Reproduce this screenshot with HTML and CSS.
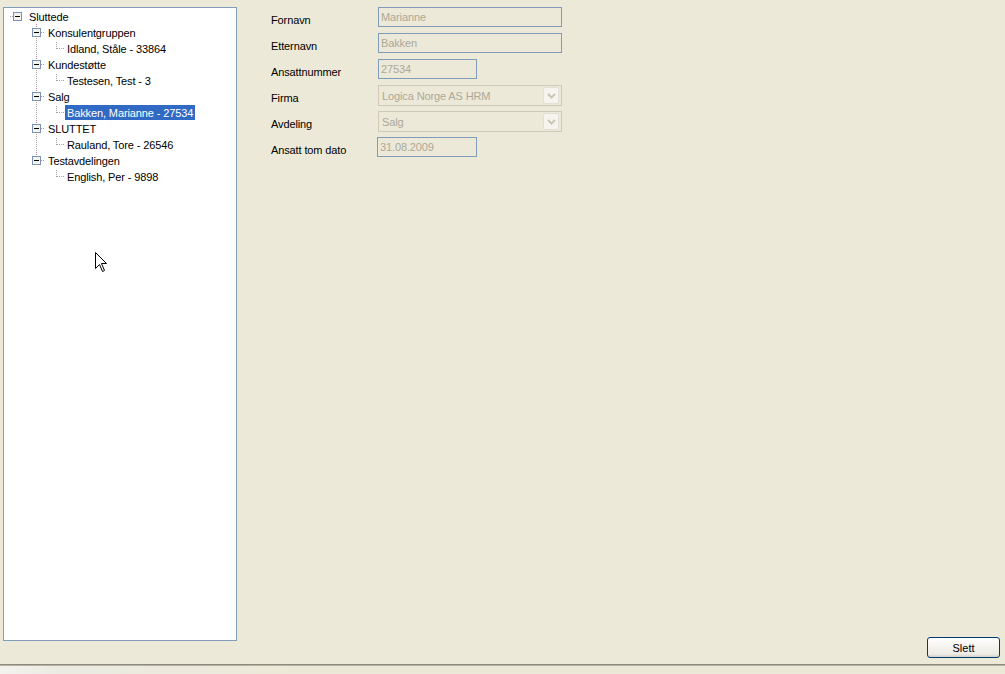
FILE: index.html
```html
<!DOCTYPE html>
<html lang="no">
<head>
<meta charset="utf-8">
<title>Sluttede</title>
<link rel="stylesheet" href="styles.css">
</head>
<body>
<div class="main">
  <div class="tree">
    <div class="row">
      <svg class="g g1" width="23" height="16" viewBox="0 0 23 16">
        <line x1="6" y1="8.5" x2="9" y2="8.5" class="dot"/>
        <rect x="9.5" y="4.5" width="8" height="8" class="box"/>
        <line x1="11" y1="8.5" x2="16" y2="8.5" class="minus"/>
      </svg>
      <span class="lbl">Sluttede</span>
    </div>

    <div class="row">
      <svg class="g" width="42" height="16" viewBox="0 0 42 16">
        <line x1="32.5" y1="0" x2="32.5" y2="16" class="dot"/>
        <line x1="37" y1="8.5" x2="41" y2="8.5" class="dot"/>
        <rect x="28.5" y="4.5" width="8" height="8" class="box"/>
        <line x1="30" y1="8.5" x2="35" y2="8.5" class="minus"/>
      </svg>
      <span class="lbl">Konsulentgruppen</span>
    </div>
    <div class="row">
      <svg class="g" width="61" height="16" viewBox="0 0 61 16">
        <line x1="32.5" y1="0" x2="32.5" y2="16" class="dot"/>
        <line x1="52.5" y1="2" x2="52.5" y2="9" class="dot"/>
        <line x1="53" y1="8.5" x2="61" y2="8.5" class="dot"/>
      </svg>
      <span class="lbl">Idland, Ståle - 33864</span>
    </div>

    <div class="row">
      <svg class="g" width="42" height="16" viewBox="0 0 42 16">
        <line x1="32.5" y1="0" x2="32.5" y2="16" class="dot"/>
        <line x1="37" y1="8.5" x2="41" y2="8.5" class="dot"/>
        <rect x="28.5" y="4.5" width="8" height="8" class="box"/>
        <line x1="30" y1="8.5" x2="35" y2="8.5" class="minus"/>
      </svg>
      <span class="lbl">Kundestøtte</span>
    </div>
    <div class="row">
      <svg class="g" width="61" height="16" viewBox="0 0 61 16">
        <line x1="32.5" y1="0" x2="32.5" y2="16" class="dot"/>
        <line x1="52.5" y1="2" x2="52.5" y2="9" class="dot"/>
        <line x1="53" y1="8.5" x2="61" y2="8.5" class="dot"/>
      </svg>
      <span class="lbl">Testesen, Test - 3</span>
    </div>

    <div class="row">
      <svg class="g" width="42" height="16" viewBox="0 0 42 16">
        <line x1="32.5" y1="0" x2="32.5" y2="16" class="dot"/>
        <line x1="37" y1="8.5" x2="41" y2="8.5" class="dot"/>
        <rect x="28.5" y="4.5" width="8" height="8" class="box"/>
        <line x1="30" y1="8.5" x2="35" y2="8.5" class="minus"/>
      </svg>
      <span class="lbl">Salg</span>
    </div>
    <div class="row">
      <svg class="g" width="61" height="16" viewBox="0 0 61 16">
        <line x1="32.5" y1="0" x2="32.5" y2="16" class="dot"/>
        <line x1="52.5" y1="2" x2="52.5" y2="9" class="dot"/>
        <line x1="53" y1="8.5" x2="61" y2="8.5" class="dot"/>
      </svg>
      <span class="lbl selected">Bakken, Marianne - 27534</span>
    </div>

    <div class="row">
      <svg class="g" width="42" height="16" viewBox="0 0 42 16">
        <line x1="32.5" y1="0" x2="32.5" y2="16" class="dot"/>
        <line x1="37" y1="8.5" x2="41" y2="8.5" class="dot"/>
        <rect x="28.5" y="4.5" width="8" height="8" class="box"/>
        <line x1="30" y1="8.5" x2="35" y2="8.5" class="minus"/>
      </svg>
      <span class="lbl">SLUTTET</span>
    </div>
    <div class="row">
      <svg class="g" width="61" height="16" viewBox="0 0 61 16">
        <line x1="32.5" y1="0" x2="32.5" y2="16" class="dot"/>
        <line x1="52.5" y1="2" x2="52.5" y2="9" class="dot"/>
        <line x1="53" y1="8.5" x2="61" y2="8.5" class="dot"/>
      </svg>
      <span class="lbl">Rauland, Tore - 26546</span>
    </div>

    <div class="row">
      <svg class="g" width="42" height="16" viewBox="0 0 42 16">
        <line x1="32.5" y1="0" x2="32.5" y2="8" class="dot"/>
        <line x1="37" y1="8.5" x2="41" y2="8.5" class="dot"/>
        <rect x="28.5" y="4.5" width="8" height="8" class="box"/>
        <line x1="30" y1="8.5" x2="35" y2="8.5" class="minus"/>
      </svg>
      <span class="lbl">Testavdelingen</span>
    </div>
    <div class="row">
      <svg class="g" width="61" height="16" viewBox="0 0 61 16">
        <line x1="52.5" y1="2" x2="52.5" y2="9" class="dot"/>
        <line x1="53" y1="8.5" x2="61" y2="8.5" class="dot"/>
      </svg>
      <span class="lbl">English, Per - 9898</span>
    </div>
  </div>

  <div class="right">
    <div class="form">
      <div class="label">Fornavn</div>
      <div class="field wide">Marianne</div>

      <div class="label">Etternavn</div>
      <div class="field wide">Bakken</div>

      <div class="label">Ansattnummer</div>
      <div class="field narrow">27534</div>

      <div class="label">Firma</div>
      <div class="combo">
        <span class="combo-text">Logica Norge AS HRM</span>
        <span class="combo-btn"><svg width="9" height="6" viewBox="0 0 9 6"><polyline points="1,1 4.5,4.5 8,1" class="chev"/></svg></span>
      </div>

      <div class="label">Avdeling</div>
      <div class="combo">
        <span class="combo-text">Salg</span>
        <span class="combo-btn"><svg width="9" height="6" viewBox="0 0 9 6"><polyline points="1,1 4.5,4.5 8,1" class="chev"/></svg></span>
      </div>

      <div class="label">Ansatt tom dato</div>
      <div class="field date">31.08.2009</div>
    </div>

    <button class="btn" type="button">Slett</button>
  </div>
</div>
<div class="statusbar"></div>

<svg class="cursor" width="13" height="21" viewBox="0 0 13 21">
  <path d="M0.5 0.5 L0.5 16.5 L4.5 12.5 L7.5 19.5 L9.5 18.5 L6.5 11.5 L11.5 11.5 Z" fill="#fff" stroke="#000" stroke-width="1" stroke-linejoin="miter"/>
</svg>
</body>
</html>
```

FILE: styles.css
```css
html, body {
  margin: 0;
  padding: 0;
}

body {
  background: #ece9d8;
  font-family: "Liberation Sans", Arial, sans-serif;
  font-size: 11px;
  letter-spacing: -0.12px;
  color: #000;
  width: 1005px;
  height: 674px;
  overflow: hidden;
  position: relative;
}

.main {
  height: 664px;
  box-sizing: border-box;
  padding-top: 7px;
  padding-left: 3px;
  display: flex;
  align-items: stretch;
}

.tree {
  width: 234px;
  height: 634px;
  box-sizing: border-box;
  border: 1px solid #7f9db9;
  background: #fff;
  flex: none;
}

.row {
  display: flex;
  align-items: stretch;
  height: 16px;
}

.g {
  display: block;
  flex: none;
  shape-rendering: crispEdges;
}

.dot {
  stroke: #a0a0a0;
  stroke-width: 1;
  stroke-dasharray: 1 1;
}

.box {
  fill: #f4f3ee;
  stroke: #7b93b5;
  stroke-width: 1;
}

.minus {
  stroke: #000;
  stroke-width: 1;
}

.lbl {
  display: block;
  height: 15px;
  line-height: 17px;
  margin-top: 1px;
  padding: 0 2px;
  white-space: nowrap;
}

.lbl.selected {
  background: #316ac5;
  color: #fff;
}

.right {
  flex: 1;
  display: flex;
  flex-direction: column;
  padding: 0 5px 6px 34px;
}

.form {
  display: grid;
  grid-template-columns: 107px auto;
  grid-auto-rows: 20px;
  row-gap: 6px;
  justify-items: start;
}

.label {
  line-height: 13px;
  padding-top: 7px;
  white-space: nowrap;
}

.field {
  box-sizing: border-box;
  height: 20px;
  border: 1px solid #7f9db9;
  background: #ece9d8;
  color: #aca899;
  line-height: 13px;
  padding: 3px 2px 0;
  white-space: nowrap;
}

.field.wide {
  width: 184px;
}

.field.narrow {
  width: 99px;
}

.field.date {
  width: 100px;
  margin-left: -1px;
}

.combo {
  box-sizing: border-box;
  width: 184px;
  height: 21px;
  border: 1px solid #cdcabb;
  background: #ece9d8;
  display: flex;
  align-items: center;
  color: #aca899;
}

.combo-text {
  flex: 1;
  padding-left: 3px;
  padding-top: 1px;
  line-height: 13px;
  white-space: nowrap;
}

.combo-btn {
  box-sizing: border-box;
  width: 16px;
  height: 17px;
  margin-right: 2px;
  border: 1px solid #e2e0d6;
  border-radius: 2px;
  background: #f5f4ef;
  display: flex;
  align-items: center;
  justify-content: center;
}

.chev {
  fill: none;
  stroke: #c9c6b6;
  stroke-width: 2;
}

.btn {
  margin-top: auto;
  align-self: flex-end;
  width: 73px;
  height: 21px;
  box-sizing: border-box;
  border: 1px solid #003c74;
  border-radius: 3px;
  background: linear-gradient(#ffffff 0%, #f3f2ed 50%, #ecebe4 85%, #d6d0c5 100%);
  font-family: "Liberation Sans", Arial, sans-serif;
  font-size: 11px;
  color: #000;
  padding: 0;
  line-height: 18px;
}

.statusbar {
  height: 10px;
  box-sizing: border-box;
  border-top: 1px solid #8e8b7e;
  box-shadow: inset 0 1px 0 #b4b1a2;
  background: linear-gradient(to right, #f3f2ee 0px, #ecebe2 60px, #ece9d8 300px);
}

.cursor {
  position: absolute;
  left: 95px;
  top: 252px;
}
```
